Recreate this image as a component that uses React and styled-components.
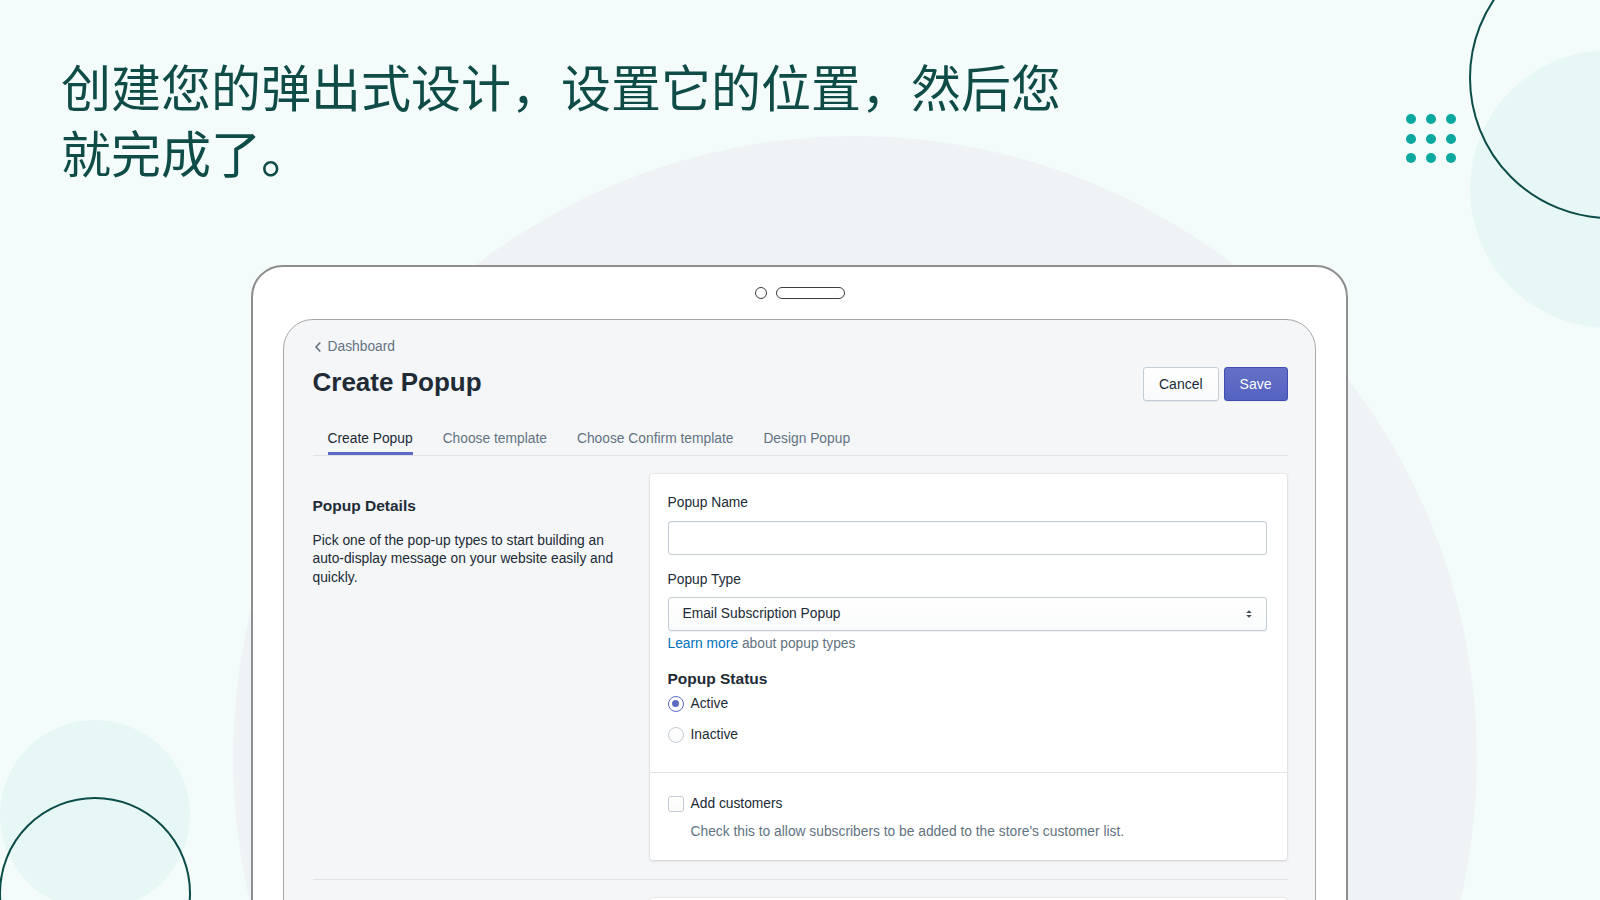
import styled, { createGlobalStyle } from "styled-components";

const GlobalStyle = createGlobalStyle`
  html, body {
    margin: 0;
    padding: 0;
  }
  body {
    background: #f3fcfb;
    font-family: "Liberation Sans", Arial, sans-serif;
  }
  * {
    box-sizing: border-box;
  }
`;

const tabs = ["Create Popup", "Choose template", "Choose Confirm template", "Design Popup"];
const dots = Array.from({ length: 9 });

const App = () => {
  return (
    <Page>
      <GlobalStyle />
      <Circle $x={855} $y={758} $r={622} $fill="#eff3f6" />
      <Circle $x={1609} $y={189} $r={139} $fill="#e7f7f5" />
      <Circle $x={1610} $y={78} $r={141} $stroke="#0b4c48" />
      <Circle $x={95} $y={815} $r={95} $fill="#e7f7f5" />
      <Circle $x={95} $y={893} $r={96} $stroke="#0b4c48" />
      <DotGrid>
        {dots.map((_, i) => (
          <Dot key={i} />
        ))}
      </DotGrid>

      <Content>
        <Headline>创建您的弹出式设计，设置它的位置，然后您就完成了。</Headline>

        <Device>
          <CameraBar>
            <Lens />
            <Speaker />
          </CameraBar>

          <Screen>
            <Breadcrumb>
              <svg width="10" height="10" viewBox="0 0 10 10">
                <path d="M6.8 1 L3 5 L6.8 9" fill="none" stroke="#637381" strokeWidth="1.7" strokeLinecap="round" strokeLinejoin="round" />
              </svg>
              Dashboard
            </Breadcrumb>

            <TitleRow>
              <PageTitle>Create Popup</PageTitle>
              <Actions>
                <Button>Cancel</Button>
                <Button $primary>Save</Button>
              </Actions>
            </TitleRow>

            <TabList>
              {tabs.map((t, i) => (
                <Tab key={t}>
                  <TabTitle $active={i === 0}>{t}</TabTitle>
                </Tab>
              ))}
            </TabList>

            <Layout>
              <Annotation>
                <AnnotationTitle>Popup Details</AnnotationTitle>
                <AnnotationText>
                  Pick one of the pop-up types to start building an auto-display message on your website easily and quickly.
                </AnnotationText>
              </Annotation>

              <Card>
                <CardSection $pb={27}>
                  <Label>Popup Name</Label>
                  <TextInput type="text" readOnly />

                  <Label $mt={15} $mb={7}>Popup Type</Label>
                  <SelectBox>
                    Email Subscription Popup
                    <svg width="8" height="12" viewBox="0 0 8 12">
                      <path d="M1.2 5 L4 2.2 L6.8 5 Z" fill="#454f5b" />
                      <path d="M1.2 7 L4 9.8 L6.8 7 Z" fill="#454f5b" />
                    </svg>
                  </SelectBox>
                  <HelpLine>
                    <Link>Learn more</Link> about popup types
                  </HelpLine>

                  <StatusTitle>Popup Status</StatusTitle>
                  <ChoiceRow $mt={5}>
                    <Radio $checked />
                    Active
                  </ChoiceRow>
                  <ChoiceRow $mt={11}>
                    <Radio />
                    Inactive
                  </ChoiceRow>
                </CardSection>

                <CardSection $divided $pt={21} $pb={18}>
                  <ChoiceRow>
                    <Checkbox />
                    Add customers
                  </ChoiceRow>
                  <ChoiceHelp>Check this to allow subscribers to be added to the store's customer list.</ChoiceHelp>
                </CardSection>
              </Card>
            </Layout>

            <Divider />

            <Layout>
              <div />
              <Card>
                <CardSection $pb={120} />
              </Card>
            </Layout>
          </Screen>
        </Device>
      </Content>
    </Page>
  );
};

const Page = styled.div`
  position: relative;
  width: 1600px;
  height: 900px;
  overflow: hidden;
  background: #f3fcfb;
`;

const Circle = styled.div`
  position: absolute;
  left: ${({ $x, $r }) => $x - $r}px;
  top: ${({ $y, $r }) => $y - $r}px;
  width: ${({ $r }) => $r * 2}px;
  height: ${({ $r }) => $r * 2}px;
  border-radius: 50%;
  background: ${({ $fill }) => $fill || "transparent"};
  border: ${({ $stroke }) => ($stroke ? `2.5px solid ${$stroke}` : "none")};
`;

const DotGrid = styled.div`
  position: absolute;
  left: 1406px;
  top: 114px;
  display: grid;
  grid-template-columns: repeat(3, 10px);
  gap: 9.5px 10px;
`;

const Dot = styled.span`
  width: 10px;
  height: 10px;
  border-radius: 50%;
  background: #0aa99f;
`;

const Content = styled.div`
  position: relative;
  z-index: 1;
`;

const Headline = styled.h1`
  margin: 0;
  padding: 52px 0 0 61px;
  width: 1085px;
  font-family: "Noto Sans CJK SC", "Noto Sans", sans-serif;
  font-size: 50px;
  font-weight: 400;
  line-height: 66px;
  color: #0f4c48;
`;

const Device = styled.div`
  margin: 81px 0 0 251px;
  width: 1097px;
  height: 760px;
  padding: 0 30px;
  background: #fff;
  border: 2px solid #8e8e8e;
  border-radius: 32px;
`;

const CameraBar = styled.div`
  height: 52px;
  display: flex;
  align-items: center;
  justify-content: center;
  gap: 9px;
`;

const Lens = styled.span`
  width: 12px;
  height: 12px;
  border: 1.8px solid #3d3d3d;
  border-radius: 50%;
`;

const Speaker = styled.span`
  width: 69px;
  height: 12px;
  border: 1.8px solid #3d3d3d;
  border-radius: 6px;
`;

const Screen = styled.div`
  height: 700px;
  padding: 16.5px 27.5px 0 28.5px;
  background: #f4f6f8;
  border: 1.5px solid #a8a8a8;
  border-radius: 30px;
  color: #212b36;
  font-size: 13.8px;
`;

const Breadcrumb = styled.div`
  display: flex;
  align-items: center;
  gap: 5px;
  height: 20px;
  color: #637381;
`;

const TitleRow = styled.div`
  margin-top: 8px;
  display: flex;
  align-items: center;
  justify-content: space-between;
`;

const PageTitle = styled.h1`
  margin: 0;
  font-size: 26px;
  line-height: 32px;
  font-weight: 700;
  color: #212b36;
`;

const Actions = styled.div`
  margin: 2px 0 -2px;
  display: flex;
  gap: 5px;
`;

const Button = styled.button`
  height: 34px;
  padding: 0 15px;
  border-radius: 3px;
  font-family: inherit;
  font-size: 14px;
  border: 1px solid ${({ $primary }) => ($primary ? "#3f4eae" : "#c4cdd5")};
  background: ${({ $primary }) =>
    $primary ? "linear-gradient(180deg, #6371c7, #5563c1)" : "linear-gradient(180deg, #fff, #f9fafb)"};
  color: ${({ $primary }) => ($primary ? "#fff" : "#212b36")};
  box-shadow: 0 1px 0 rgba(22, 29, 37, 0.05);
`;

const TabList = styled.div`
  margin-top: 20px;
  display: flex;
  border-bottom: 1px solid #dfe3e8;
`;

const Tab = styled.div`
  padding: 0 15px;
`;

const TabTitle = styled.span`
  display: block;
  padding: 10px 0 3px;
  line-height: 20px;
  border-bottom: 3px solid ${({ $active }) => ($active ? "#5c6ac4" : "transparent")};
  color: ${({ $active }) => ($active ? "#212b36" : "#637381")};
`;

const Layout = styled.div`
  margin-top: 18px;
  display: grid;
  grid-template-columns: 317px 637px;
  gap: 20px;
  align-items: start;
`;

const Annotation = styled.div`
  padding-top: 22px;
`;

const AnnotationTitle = styled.h2`
  margin: 0;
  font-size: 15.5px;
  line-height: 20px;
  font-weight: 700;
`;

const AnnotationText = styled.p`
  margin: 16px 0 0;
  line-height: 18.5px;
`;

const Card = styled.div`
  background: #fff;
  border-radius: 3px;
  box-shadow: 0 0 0 1px rgba(63, 63, 68, 0.05), 0 1px 3px 0 rgba(63, 63, 68, 0.15);
`;

const CardSection = styled.div`
  padding: ${({ $pt = 19, $pb = 20 }) => `${$pt}px 20px ${$pb}px 18px`};
  border-top: ${({ $divided }) => ($divided ? "1px solid #dfe3e8" : "none")};
`;

const Label = styled.div`
  margin-top: ${({ $mt = 0 }) => $mt}px;
  margin-bottom: ${({ $mb = 8 }) => $mb}px;
  line-height: 20px;
`;

const TextInput = styled.input`
  display: block;
  width: 100%;
  height: 34px;
  border: 1px solid #c4cdd5;
  border-radius: 3px;
  background: #fff;
  box-shadow: inset 0 1px 0 0 rgba(99, 115, 129, 0.05);
`;

const SelectBox = styled.div`
  height: 34px;
  padding: 0 13px 0 14px;
  display: flex;
  align-items: center;
  justify-content: space-between;
  border: 1px solid #c4cdd5;
  border-radius: 3px;
  background: linear-gradient(180deg, #fff, #f9fafb);
  box-shadow: 0 1px 0 rgba(22, 29, 37, 0.05);
`;

const HelpLine = styled.div`
  margin-top: 3px;
  line-height: 20px;
  color: #637381;
`;

const Link = styled.span`
  color: #006fbb;
`;

const StatusTitle = styled.h3`
  margin: 15px 0 0;
  font-size: 15.5px;
  line-height: 20px;
  font-weight: 700;
`;

const ChoiceRow = styled.div`
  margin-top: ${({ $mt = 0 }) => $mt}px;
  display: flex;
  align-items: center;
  gap: 7px;
  line-height: 20px;
`;

const Radio = styled.span`
  width: 16px;
  height: 16px;
  border-radius: 50%;
  display: flex;
  align-items: center;
  justify-content: center;
  border: ${({ $checked }) => ($checked ? "1.5px solid #5c6ac4" : "1px solid #c4cdd5")};
  background: linear-gradient(180deg, #fff, #f9fafb);

  &::after {
    content: "";
    width: 7px;
    height: 7px;
    border-radius: 50%;
    background: ${({ $checked }) => ($checked ? "#5c6ac4" : "transparent")};
  }
`;

const Checkbox = styled.span`
  width: 16px;
  height: 16px;
  border-radius: 3px;
  border: 1px solid #c4cdd5;
  background: linear-gradient(180deg, #fff, #f9fafb);
`;

const ChoiceHelp = styled.div`
  margin-top: 8px;
  padding-left: 23px;
  line-height: 20px;
  color: #637381;
`;

const Divider = styled.div`
  margin-top: 19px;
  border-top: 1px solid #dfe3e8;
`;

export default App;
